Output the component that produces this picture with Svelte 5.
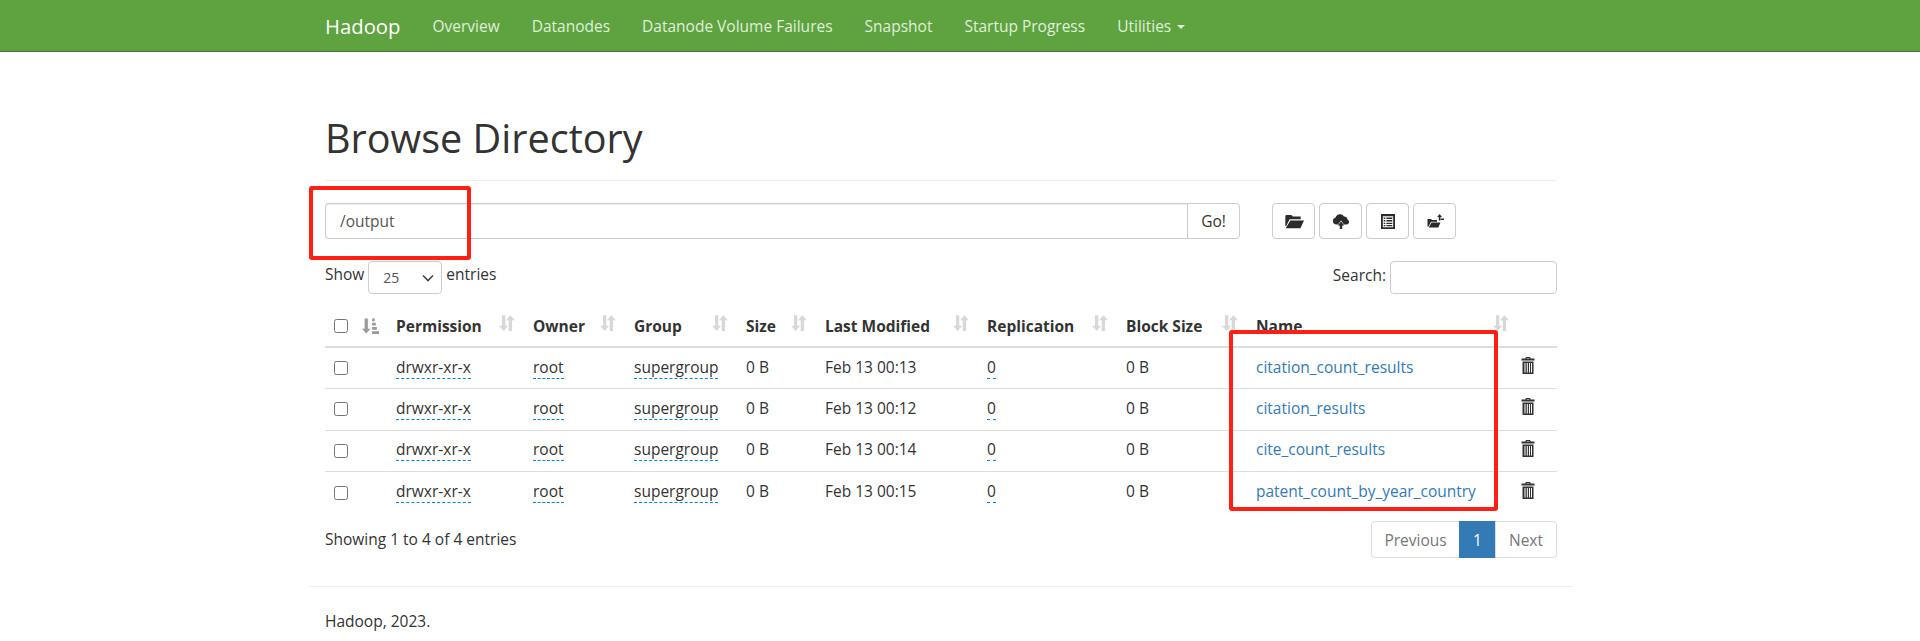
<script lang="ts">
    type Row = { modified: string; name: string };

    const rows: Row[] = [
        { modified: 'Feb 13 00:13', name: 'citation_count_results' },
        { modified: 'Feb 13 00:12', name: 'citation_results' },
        { modified: 'Feb 13 00:14', name: 'cite_count_results' },
        { modified: 'Feb 13 00:15', name: 'patent_count_by_year_country' }
    ];

    const navLinks = ['Overview', 'Datanodes', 'Datanode Volume Failures', 'Snapshot', 'Startup Progress'];

    const columns = ['Permission', 'Owner', 'Group', 'Size', 'Last Modified', 'Replication', 'Block Size', 'Name'];
</script>

{#snippet sortIcon()}
    <svg class="sort" viewBox="0 0 14 16" aria-hidden="true">
        <path d="M2.500 1h3v9.500H8L4 15 0 10.500h2.500z" />
        <path d="M8.500 15h3V5.500H14L10 1 6 5.500h2.500z" />
    </svg>
{/snippet}

<div class="page">
    <nav class="navbar">
        <div class="nav-inner">
            <a class="brand" href="#top">Hadoop</a>
            {#each navLinks as link}
                <a class="nav-link" href="#top">{link}</a>
            {/each}
            <a class="nav-link" href="#top">Utilities <span class="caret"></span></a>
        </div>
    </nav>

    <main class="container">
        <div class="page-header">
            <h1>Browse Directory</h1>
        </div>

        <div class="path-row">
            <div class="input-group">
                <input class="path-input" type="text" value="/output" />
                <button class="go" type="button">Go!</button>
            </div>
            <div class="tools">
                <button type="button" aria-label="Create directory">
                    <svg class="folder" viewBox="0 0 18 16"><path d="M2 2.500h4.500L8 4h7v2.500H5L2 12.500H1.200V3.300z" /><path d="M5.700 7.500H18L14.800 14.500H1.500z" /></svg>
                </button>
                <button type="button" aria-label="Upload">
                    <svg class="cloud" viewBox="0 0 18 16"><path d="M4 11.500A3.400 3.400 0 0 1 3.500 4.800 4.600 4.600 0 0 1 12 3.500 3.100 3.100 0 0 1 15.500 6.500 2.600 2.600 0 0 1 14.500 11.500H12L9 7.500 6 11.500z" /><path d="M9 8.500 12.300 12.500H10.200V16H7.800V12.500H5.700z" /></svg>
                </button>
                <button type="button" aria-label="Cut and paste">
                    <svg class="list" viewBox="1.500 0 13 16" preserveAspectRatio="none"><path fill-rule="evenodd" d="M1.500 0h13v16h-13zM3.200 2.500v11.500h9.600V2.500zM4 3.800h1.500v1.500H4zM6.500 3.800H12v1.500H6.500zM4 6.500h1.500V8H4zM6.500 6.500H12V8H6.500zM4 9.200h1.500v1.500H4zM6.500 9.200H12v1.500H6.500zM4 11.700h1.500v1.300H4zM6.500 11.700H12v1.300H6.500z" /></svg>
                </button>
                <button type="button" aria-label="Parallel upload">
                    <svg class="share" viewBox="0 0 18 16"><path d="M1.500 6h3.500l1 1h5v1.800H5L2.500 13.500h-1z" /><path d="M5.500 9.500H14.500L12.300 14.500H2.700z" /><path d="M13.500 1 16 4H14.500V7.500H12.800V4H11.200z" /><path d="M15 5.500h3v1.500h-3z" /></svg>
                </button>
            </div>
        </div>

        <div class="filter-row">
            <label class="length">
                Show
                <select>
                    <option>25</option>
                    <option>50</option>
                    <option>100</option>
                </select>
                entries
            </label>
            <label class="search">
                Search:
                <input type="search" />
            </label>
        </div>

        <table>
            <thead>
                <tr>
                    <th class="col-check"><input type="checkbox" /></th>
                    <th class="col-order">
                        <svg class="sort active" viewBox="0 0 16 16" aria-hidden="true">
                            <path d="M2.500 1h3v9.500H8L4 15 0 10.500h2.500z" />
                            <path d="M9.500 1h2.500v2.500h-2.500zM9.500 5h3.500v2.500h-3.500zM9.500 9h4.500v2.500h-4.500zM9.500 13h6.500v2.500h-6.500z" />
                        </svg>
                    </th>
                    {#each columns as column}
                        <th class="sortable">{column}{@render sortIcon()}</th>
                    {/each}
                    <th class="col-delete"></th>
                </tr>
            </thead>
            <tbody>
                {#each rows as row}
                    <tr>
                        <td class="col-check"><input type="checkbox" /></td>
                        <td></td>
                        <td><span class="editable">drwxr-xr-x</span></td>
                        <td><span class="editable">root</span></td>
                        <td><span class="editable">supergroup</span></td>
                        <td>0 B</td>
                        <td>{row.modified}</td>
                        <td><span class="editable">0</span></td>
                        <td>0 B</td>
                        <td><a href="#top">{row.name}</a></td>
                        <td class="col-delete">
                            <svg class="trash" viewBox="0 0 14 17" aria-hidden="true">
                                <path fill-rule="evenodd" d="M5 0h4l.8 1.500H13.500V3.500H.5V1.500H4.200zM5.800 1 5.500 1.500H8.500L8.200 1z" />
                                <path fill-rule="evenodd" d="M1.500 4.500h11V17h-11zM3.500 6v9.500h1V6zM5.800 6v9.500h1V6zM8 6v9.500h1V6zM10 6v9.500h1V6z" />
                            </svg>
                        </td>
                    </tr>
                {/each}
            </tbody>
        </table>

        <div class="table-footer">
            <span class="info">Showing 1 to 4 of 4 entries</span>
            <div class="pagination">
                <a class="prev" href="#top">Previous</a>
                <a class="current" href="#top">1</a>
                <a class="next" href="#top">Next</a>
            </div>
        </div>

        <footer>
            <p>Hadoop, 2023.</p>
        </footer>

        <div class="highlight path-mark"></div>
        <div class="highlight name-mark"></div>
    </main>
</div>

<style>
    :global(body) {
        margin: 0;
        background: #fff;
        color: #333;
        font-family: 'Open Sans', 'Noto Sans', sans-serif;
        font-size: 15.500px;
        overflow: hidden;
    }

    .page {
        padding-right: 38px;
    }

    a {
        text-decoration: none;
    }

    .navbar {
        margin-right: -38px;
        padding-right: 38px;
        height: 51px;
        background: #5fa341;
        border-bottom: 1px solid #4d6f3d;
    }

    .nav-inner {
        width: 1232px;
        margin: 0 auto;
        display: flex;
        align-items: center;
        height: 51px;
        gap: 32px;
    }

    .brand {
        color: #fff;
        font-size: 20.300px;
    }

    .nav-link {
        color: #dff0d8;
    }

    .caret {
        display: inline-block;
        margin-left: 2px;
        vertical-align: middle;
        border-top: 4px solid #dff0d8;
        border-left: 4px solid transparent;
        border-right: 4px solid transparent;
    }

    .container {
        position: relative;
        width: 1232px;
        margin: 0 auto;
        padding: 64px 16px 0;
    }

    .page-header {
        padding-bottom: 20px;
        border-bottom: 1px solid #eee;
    }

    h1 {
        margin: 0;
        font-size: 39.600px;
        font-weight: 400;
        line-height: 44px;
    }

    .path-row {
        display: flex;
        margin-top: 22px;
        gap: 32px;
    }

    .input-group {
        display: flex;
        width: 915px;
        height: 36px;
    }

    .path-input {
        flex: 1;
        min-width: 0;
        box-sizing: border-box;
        padding: 0 14px;
        border: 1px solid #ccc;
        border-right: 0;
        border-radius: 4px 0 0 4px;
        box-shadow: inset 0 1px 1px rgba(0, 0, 0, 0.075);
        color: #555;
        font: inherit;
    }

    .go {
        width: 53px;
        padding: 0;
        border: 1px solid #ccc;
        border-radius: 0 4px 4px 0;
        background: #fff;
        color: #333;
        font: inherit;
    }

    .tools {
        display: flex;
        gap: 4px;
    }

    .tools button {
        width: 43px;
        height: 36px;
        display: flex;
        align-items: center;
        justify-content: center;
        padding: 0;
        border: 1px solid #ccc;
        border-radius: 4px;
        background: #fff;
    }

    .tools svg {
        fill: #2b2b2b;
    }

    .folder {
        width: 20px;
        height: 18px;
    }

    .cloud {
        width: 18px;
        height: 16px;
    }

    .list {
        width: 14px;
        height: 15px;
    }

    .share {
        width: 18px;
        height: 16px;
    }

    .filter-row {
        display: flex;
        justify-content: space-between;
        margin-top: 22px;
        height: 33px;
    }

    .length,
    .search {
        display: flex;
        align-items: flex-start;
        gap: 4px;
        line-height: 27px;
    }

    .search {
        line-height: 28px;
    }

    .length select {
        appearance: none;
        box-sizing: border-box;
        width: 74px;
        height: 33px;
        padding: 0 0 0 14px;
        border: 1px solid #ccc;
        border-radius: 4px;
        background: #fff url("data:image/svg+xml,%3Csvg xmlns='http://www.w3.org/2000/svg' width='12' height='8'%3E%3Cpath d='M1 1.500l5 5 5-5' fill='none' stroke='%23444' stroke-width='1.600'/%3E%3C/svg%3E") no-repeat right 7px center;
        color: #555;
        font: inherit;
        font-size: 14px;
        line-height: normal;
    }

    .search input {
        box-sizing: border-box;
        width: 167px;
        height: 33px;
        border: 1px solid #ccc;
        border-radius: 4px;
    }

    table {
        width: 100%;
        margin-top: 11px;
        border-collapse: collapse;
        table-layout: fixed;
    }

    th {
        position: relative;
        height: 42px;
        padding: 0 9px;
        border-bottom: 2px solid #ddd;
        box-sizing: border-box;
        text-align: left;
        font-weight: 700;
        white-space: nowrap;
    }

    td {
        height: 41.600px;
        padding: 0 9px 3px;
        border-bottom: 1px solid #ddd;
        box-sizing: border-box;
        white-space: nowrap;
    }

    tbody tr:last-child td {
        border-bottom: 0;
    }

    th:nth-child(1) { width: 32px; }
    th:nth-child(2) { width: 30px; }
    th:nth-child(3) { width: 137px; }
    th:nth-child(4) { width: 101px; }
    th:nth-child(5) { width: 112px; }
    th:nth-child(6) { width: 79px; }
    th:nth-child(7) { width: 162px; }
    th:nth-child(8) { width: 139px; }
    th:nth-child(9) { width: 130px; }
    th:nth-child(10) { width: 271px; }

    th.col-check,
    td.col-check {
        padding: 0 0 0 9px;
    }

    .col-check input {
        display: block;
        width: 14px;
        height: 14px;
        margin: 0;
    }

    th.col-order {
        padding: 0 0 0 5px;
    }

    .sort {
        width: 16px;
        height: 18px;
        fill: #d8d8d8;
    }

    .sortable .sort {
        position: absolute;
        right: 9px;
        top: 9px;
    }

    .sort.active {
        display: block;
        width: 17px;
        fill: #999;
    }

    .editable {
        border-bottom: 1px dashed #08c;
    }

    td a {
        color: #337ab7;
    }

    td.col-delete {
        padding: 0 0 0 3px;
    }

    .trash {
        display: block;
        width: 14px;
        height: 17px;
        fill: #333;
        margin-top: -5px;
    }

    .table-footer {
        display: flex;
        justify-content: space-between;
        align-items: center;
        margin-top: 8px;
        height: 37px;
    }

    .info {
        padding-bottom: 2px;
    }

    .pagination {
        display: flex;
        height: 37px;
    }

    .pagination a {
        display: flex;
        align-items: center;
        justify-content: center;
        border: 1px solid #ddd;
        margin-left: -1px;
        color: #777;
        box-sizing: border-box;
    }

    .prev {
        width: 89px;
        border-radius: 4px 0 0 4px;
    }

    .pagination .current {
        width: 37px;
        background: #337ab7;
        border-color: #337ab7;
        color: #fff;
    }

    .next {
        width: 62px;
        border-radius: 0 4px 4px 0;
    }

    footer {
        margin: 28px -16px 0;
        padding: 0 16px;
        border-top: 1px solid #eee;
    }

    footer p {
        margin: 23px 0 0;
    }

    .highlight {
        position: absolute;
        box-sizing: border-box;
        border: 4px solid #ff1f14;
        border-radius: 3px;
        pointer-events: none;
    }

    .path-mark {
        left: 0;
        top: 134px;
        width: 162px;
        height: 74px;
    }

    .name-mark {
        left: 920px;
        top: 278px;
        width: 269px;
        height: 181px;
    }
</style>
